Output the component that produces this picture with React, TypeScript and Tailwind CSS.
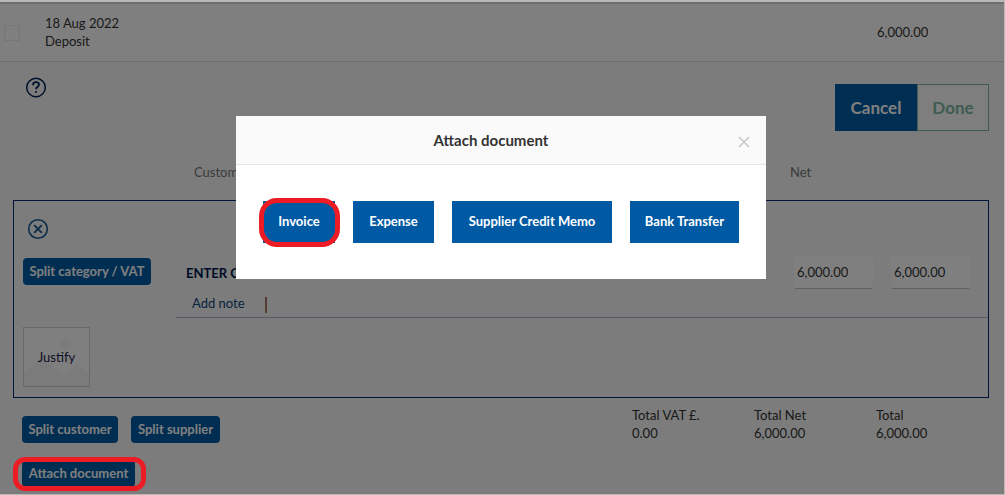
import type { ReactNode } from "react";

const fontStack = "font-['Lato','Liberation_Sans',sans-serif]";

function Highlight({ className }: { className: string }) {
  return (
    <span
      aria-hidden="true"
      className={`pointer-events-none absolute z-20 border-[5px] border-[#ed1c24] ${className}`}
    />
  );
}

function SmallButton({ children, className }: { children: ReactNode; className: string }) {
  return (
    <button
      type="button"
      className={`relative flex h-[27px] items-center justify-center rounded bg-[#005ca5] pb-[2px] text-[13px] font-bold whitespace-nowrap text-white ${className}`}
    >
      {children}
    </button>
  );
}

function DialogButton({ children, className }: { children: ReactNode; className: string }) {
  return (
    <button
      type="button"
      className={`relative flex h-[42px] items-center justify-center bg-[#005aa3] pb-[2px] text-[13px] font-bold whitespace-nowrap text-white ${className}`}
    >
      {children}
    </button>
  );
}

function Total({ label, value }: { label: string; value: string }) {
  return (
    <div className="w-[122px]">
      <dt>{label}</dt>
      <dd>{value}</dd>
    </div>
  );
}

function AmountInput({ label }: { label: string }) {
  return (
    <input
      type="text"
      aria-label={label}
      defaultValue="6,000.00"
      className="h-[33px] w-[79px] rounded-xs border-b border-[#bfc2c0] bg-white px-[3px] text-[13px] text-[#333] outline-none"
    />
  );
}

function TransactionRow() {
  return (
    <header className="flex h-[60px] items-center border-t-2 border-b border-t-[#dedede] border-b-[#dcd9da] bg-white pl-1">
      <input
        type="checkbox"
        aria-label="Select transaction"
        className="size-4 appearance-none border border-[#eee]"
      />
      <div className="ml-[25px] pb-[2px]">
        <p>18 Aug 2022</p>
        <p>Deposit</p>
      </div>
      <p className="ml-auto w-[127px] pb-[2px]">6,000.00</p>
    </header>
  );
}

function SplitPanel() {
  return (
    <section className="mr-[15px] ml-[13px] h-[198px] border border-[#002873]">
      <div className="flex h-[56px] items-center pl-[13px]">
        <button type="button" aria-label="Remove split" className="text-[#165a99]">
          <svg width="22" height="22" viewBox="0 0 22 22" fill="none" stroke="currentColor">
            <circle cx="11" cy="11" r="9.3" strokeWidth="1.6" />
            <path d="M7.2 7.2l7.6 7.6M14.8 7.2l-7.6 7.6" strokeWidth="1.8" />
          </svg>
        </button>
      </div>
      <div className="flex">
        <div className="w-[162px] pl-[9px]">
          <SmallButton className="mt-px w-[128px]">Split category / VAT</SmallButton>
        </div>
        <div className="flex-1 border-b border-[#b3b3cb]">
          <div className="flex h-[31px] items-center pr-[18px] pl-[10px]">
            <span className="font-bold text-[#00184f]">ENTER CATEGORY</span>
            <div className="ml-auto flex gap-[18px]">
              <AmountInput label="Net" />
              <AmountInput label="Total" />
            </div>
          </div>
          <div className="flex h-[29px] items-center pl-4">
            <a href="#note" className="text-[#10467d]">
              Add note
            </a>
            <span className="mt-[5px] ml-5 h-4 w-[2px] bg-[#a8765f]" />
          </div>
        </div>
      </div>
      <button
        type="button"
        className="relative mt-[9px] ml-[9px] flex h-[60px] w-[67px] items-center justify-center border border-[#d0d0d0] bg-white text-[#1d1d4c]"
      >
        <svg className="absolute inset-0 size-full" viewBox="0 0 65 58" fill="#f7f7f7" aria-hidden="true">
          <circle cx="42" cy="16" r="6" />
          <path d="M0 45 14 32Q18 28 22 32L40 49 50 38Q53 35 56 38L65 46V58H0Z" />
        </svg>
        <span className="relative">Justify</span>
      </button>
    </section>
  );
}

function AttachDialog() {
  return (
    <div
      role="dialog"
      aria-modal="true"
      aria-labelledby="attach-title"
      className="mt-[114px] w-[530px] bg-white"
    >
      <div className="relative flex h-[49px] items-center justify-center border-b border-[#e5e5e5] bg-[#fafafa]">
        <h2 id="attach-title" className="pr-5 text-[15px] font-bold text-[#333]">
          Attach document
        </h2>
        <button type="button" aria-label="Close" className="absolute right-4 bottom-4 text-[#c8c8c8]">
          <svg width="12" height="12" viewBox="0 0 12 12" fill="none" stroke="currentColor" strokeWidth="1.6">
            <path d="M1 1l10 10M11 1L1 11" />
          </svg>
        </button>
      </div>
      <div className="flex justify-between px-[27px] py-9">
        <DialogButton className="w-[72px]">
          Invoice
          <Highlight className="-top-[3px] -right-[5px] -bottom-1 -left-1 rounded-[18px]" />
        </DialogButton>
        <DialogButton className="w-[81px]">Expense</DialogButton>
        <DialogButton className="w-[160px]">Supplier Credit Memo</DialogButton>
        <DialogButton className="w-[109px]">Bank Transfer</DialogButton>
      </div>
    </div>
  );
}

export default function App() {
  return (
    <div className={`flex min-h-screen flex-col bg-[#b8b8b8] pt-[2px] pr-px pb-px text-[13px] leading-[18px] text-[#333] ${fontStack}`}>
      <div className="relative flex-1 bg-[#f6f9f7]">
        <TransactionRow />
        <main>
          <div className="flex items-start justify-between pt-[14px] pr-[15px] pl-[25px]">
            <button type="button" aria-label="Help" className="flex text-[#00205b]">
              <svg width="22" height="22" viewBox="0 0 22 22" fill="none" stroke="currentColor">
                <circle cx="11" cy="11.5" r="9.3" strokeWidth="1.5" />
                <path d="M8 9.3c0-4 6-4 6-.7 0 2.2-3 2-3 4.7" strokeWidth="1.8" />
                <circle cx="11" cy="15.9" r="0.6" fill="currentColor" />
              </svg>
            </button>
            <div className="mt-2 flex text-[17px] font-bold">
              <button type="button" className="h-[47px] w-[82px] bg-[#005ca5] text-white">
                Cancel
              </button>
              <button type="button" className="h-[47px] w-[72px] border border-[#80b8a2] bg-[#fcfdfc] text-[#80b8a2]">
                Done
              </button>
            </div>
          </div>
          <div className="flex h-[69px] items-center justify-between pt-[12px] pl-[194px] text-[#767676]">
            <span>Customer</span>
            <span className="w-[214px]">Net</span>
          </div>
          <SplitPanel />
          <div className="flex items-start pl-[22px]">
            <div className="mt-[18px]">
              <div className="flex gap-[13px]">
                <SmallButton className="w-[96px]">Split customer</SmallButton>
                <SmallButton className="w-[89px]">Split supplier</SmallButton>
              </div>
              <div className="mt-[17px] flex">
                <SmallButton className="w-[113px]">
                  Attach document
                  <Highlight className="-top-[3px] -right-[11px] -bottom-1 -left-[9px] rounded-[12px]" />
                </SmallButton>
              </div>
            </div>
            <dl className="mt-2 ml-auto flex pr-[6px]">
              <Total label="Total VAT £." value="0.00" />
              <Total label="Total Net" value="6,000.00" />
              <Total label="Total" value="6,000.00" />
            </dl>
          </div>
        </main>
        <div className="absolute inset-0 z-10 flex items-start justify-center bg-black/50 pr-[2px]">
          <AttachDialog />
        </div>
      </div>
    </div>
  );
}
